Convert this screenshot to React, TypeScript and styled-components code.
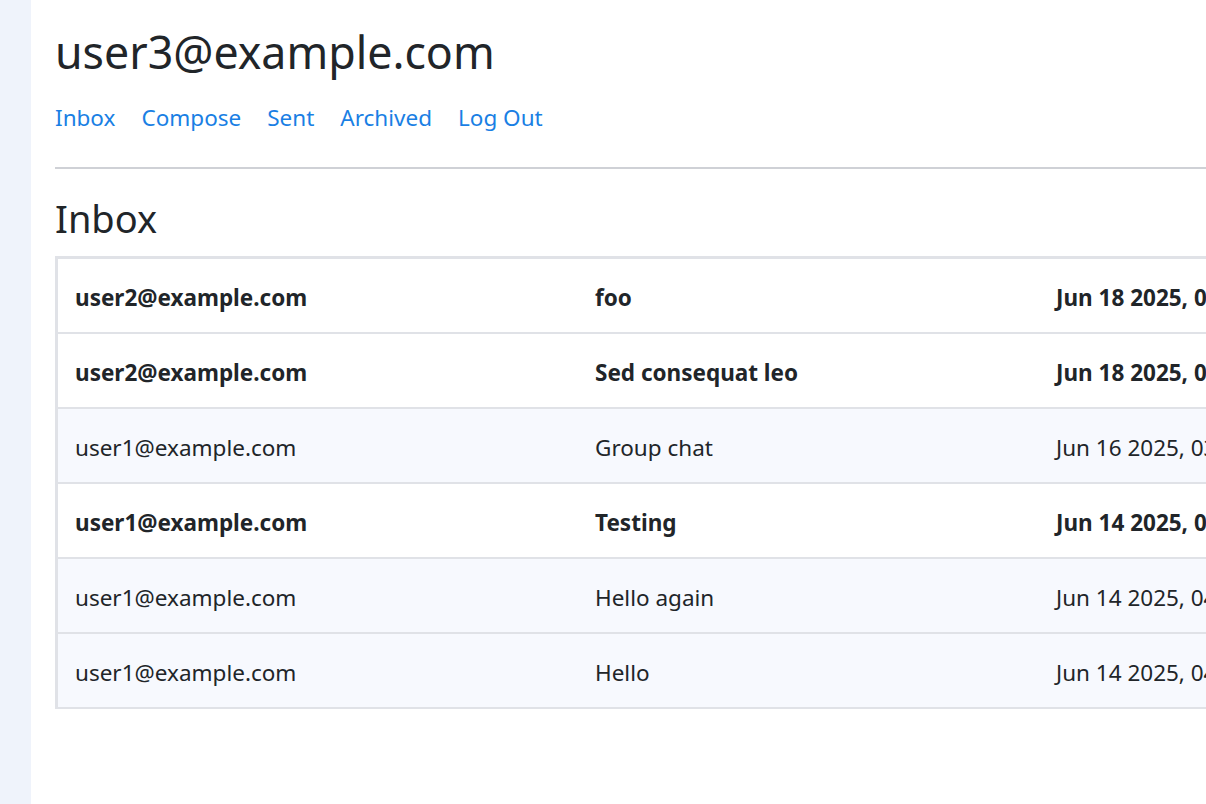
import styled, { createGlobalStyle } from 'styled-components';

const GlobalStyle = createGlobalStyle`
  html, body {
    margin: 0;
    padding: 0;
    background: #ffffff;
    overflow: hidden;
  }
  body {
    font-family: "Noto Sans", "Open Sans", sans-serif;
    color: #212529;
  }
`;

const Shell = styled.div`
  display: flex;
  min-height: 804px;
  width: 1206px;
  overflow: hidden;
`;

const Sidebar = styled.aside`
  flex: 0 0 31px;
  background: #eff3fb;
`;

const Main = styled.main`
  flex: 1;
  min-width: 0;
  padding: 22px 0 0 24px;
`;

const Title = styled.h1`
  margin: 0;
  font-size: 44.7px;
  font-weight: 400;
  line-height: 60px;
  color: #212529;
`;

const Nav = styled.nav`
  display: flex;
  gap: 26px;
  margin-top: 20px;
`;

const NavLink = styled.a`
  color: #1a7fe4;
  font-size: 22.5px;
  line-height: 32px;
  text-decoration: none;
  cursor: pointer;
`;

const Divider = styled.hr`
  margin: 33px 0 0;
  border: none;
  border-top: 2px solid #cfd1d6;
`;

const Heading = styled.h2`
  margin: 24px 0 0;
  font-size: 38px;
  font-weight: 400;
  line-height: 50px;
  color: #212529;
`;

const Table = styled.div`
  margin-top: 13px;
  width: 1300px;
  border: 3px solid #e0e2e7;
  border-bottom-width: 2px;
`;

const Row = styled.div<{ $unread: boolean }>`
  display: grid;
  grid-template-columns: 520px 461px 1fr;
  height: 73px;
  align-items: center;
  background: ${({ $unread }) => ($unread ? '#ffffff' : '#f7f9fe')};
  font-weight: ${({ $unread }) => ($unread ? 700 : 400)};
  & + & {
    border-top: 2px solid #e0e2e7;
  }
`;

const Cell = styled.div`
  padding: 3px 17px 0;
  font-size: 22.5px;
  color: #212529;
  white-space: nowrap;
  overflow: hidden;
`;

const messages = [
  { from: 'user2@example.com', subject: 'foo', date: 'Jun 18 2025, 09:12 AM', unread: true },
  { from: 'user2@example.com', subject: 'Sed consequat leo', date: 'Jun 18 2025, 08:47 AM', unread: true },
  { from: 'user1@example.com', subject: 'Group chat', date: 'Jun 16 2025, 03:20 PM', unread: false },
  { from: 'user1@example.com', subject: 'Testing', date: 'Jun 14 2025, 06:05 PM', unread: true },
  { from: 'user1@example.com', subject: 'Hello again', date: 'Jun 14 2025, 04:41 PM', unread: false },
  { from: 'user1@example.com', subject: 'Hello', date: 'Jun 14 2025, 04:30 PM', unread: false },
];

export default function App() {
  return (
    <>
      <GlobalStyle />
      <Shell>
        <Sidebar />
        <Main>
          <Title>user3@example.com</Title>
          <Nav>
            <NavLink>Inbox</NavLink>
            <NavLink>Compose</NavLink>
            <NavLink>Sent</NavLink>
            <NavLink>Archived</NavLink>
            <NavLink>Log Out</NavLink>
          </Nav>
          <Divider />
          <Heading>Inbox</Heading>
          <Table>
            {messages.map((m, i) => (
              <Row key={i} $unread={m.unread}>
                <Cell>{m.from}</Cell>
                <Cell>{m.subject}</Cell>
                <Cell>{m.date}</Cell>
              </Row>
            ))}
          </Table>
        </Main>
      </Shell>
    </>
  );
}
